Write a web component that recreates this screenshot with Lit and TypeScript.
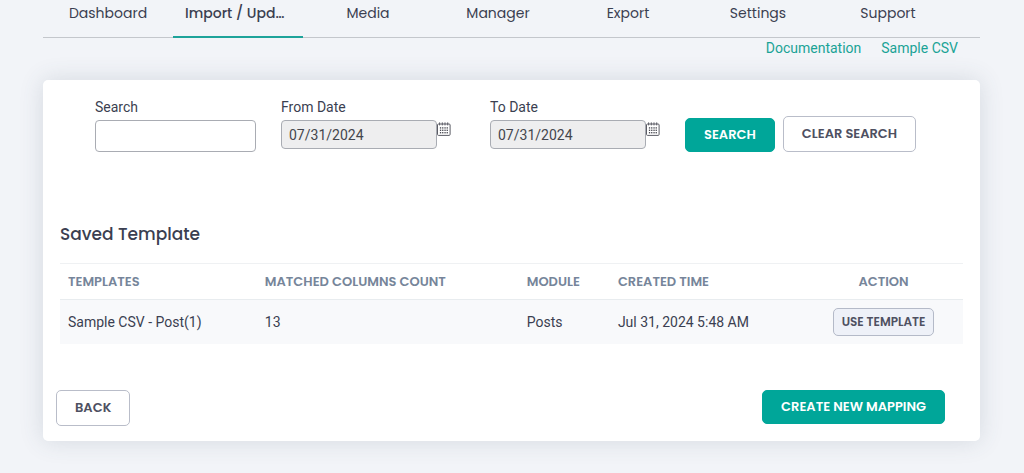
import { LitElement, html, css, svg } from "lit";
import { customElement, state } from "lit/decorators.js";
import { classMap } from "lit/directives/class-map.js";

interface Template {
  name: string;
  count: number;
  module: string;
  created: string;
}

const TABS = ["Dashboard", "Import / Update", "Media", "Manager", "Export", "Settings", "Support"];

const TEMPLATES: Template[] = [
  { name: "Sample CSV - Post(1)", count: 13, module: "Posts", created: "Jul 31, 2024 5:48 AM" },
];

@customElement("calendar-icon")
class CalendarIcon extends LitElement {
  static styles = css`
    :host {
      display: block;
      width: 14px;
      height: 14px;
    }
    svg {
      display: block;
    }
  `;

  render() {
    const dots = [5.2, 7.6, 10].flatMap((y) =>
      [2.9, 5.1, 7.4, 9.6].map((x) => svg`<rect x=${x} y=${y} width="1.3" height="1.4" />`)
    );
    return html`
      <svg width="14" height="14" viewBox="0 0 14 14" fill="#4c4d55" aria-hidden="true">
        <rect x="0.5" y="2" width="12.6" height="11.4" rx="1" fill="#fff" stroke="#5c5d66" />
        <path d="M2.6 0.4v3M5.3 0.4v3M8 0.4v3M10.7 0.4v3" stroke="#5c5d66" stroke-width="1" />
        ${dots}
      </svg>
    `;
  }
}

@customElement("app-root")
class AppRoot extends LitElement {
  @state() private active = 1;

  static styles = css`
    :host {
      display: block;
      box-sizing: border-box;
      min-height: 100vh;
      padding: 0 44px 32px 43px;
      background: #f2f4f8;
      color: #3b3f51;
      font: 14px/20px Roboto, sans-serif;
    }
    *,
    *::before {
      box-sizing: border-box;
    }
    a {
      text-decoration: none;
      color: inherit;
    }
    .tabs,
    h1,
    th,
    button {
      font-family: Poppins, Inter, sans-serif;
    }
    .tabs {
      display: flex;
      height: 38px;
      border-bottom: 1px solid #c4c7cc;
    }
    .tab {
      flex: 0 1 130px;
      height: 38px;
      padding: 3px 12px 0;
      border-bottom: 2px solid transparent;
      text-align: center;
      overflow: hidden;
      white-space: nowrap;
      text-overflow: ellipsis;
    }
    .tab.active {
      border-color: #1ea39a;
      font-weight: 500;
    }
    .links {
      display: flex;
      justify-content: flex-end;
      gap: 20px;
      padding: 0 22px 22px 0;
      color: #1aa396;
    }
    .card {
      border-radius: 5px;
      background: #fff;
      box-shadow: 0 0 24px rgba(60, 80, 100, 0.16);
      padding: 17px 17px 15px;
    }
    .filters {
      display: grid;
      grid-template-columns: 161fr 170fr 184fr 231px;
      column-gap: 25px;
      align-items: start;
      padding: 0 47px 0 35px;
    }
    .to {
      padding-left: 14px;
    }
    label {
      display: block;
      margin-bottom: 3px;
    }
    input {
      display: block;
      width: 100%;
      min-width: 0;
      height: 32px;
      padding: 0 7px;
      border: 1px solid #a9acb3;
      border-radius: 4px;
      background: #fff;
      color: #44464d;
      font: inherit;
    }
    .date {
      display: flex;
    }
    .date input {
      flex: 1;
      height: 29px;
      background: #eeeeef;
    }
    .pick {
      display: block;
      align-self: start;
      margin-top: 2px;
      padding: 0;
      border: 0;
      background: none;
    }
    .actions {
      display: flex;
      align-items: flex-end;
      gap: 8px;
      padding-top: 19px;
    }
    .btn {
      height: 36px;
      padding: 0 18px;
      border: 1px solid #b9bdc9;
      border-radius: 5px;
      background: #fff;
      color: #4e5061;
      font-size: 13px;
      font-weight: 600;
      line-height: 20px;
      white-space: nowrap;
    }
    .btn.primary {
      height: 34px;
      border-color: #00a699;
      background: #00a699;
      color: #fff;
    }
    h1 {
      margin: 70px 0 17px;
      font-size: 17px;
      line-height: 24px;
      font-weight: 500;
    }
    table {
      width: 100%;
      table-layout: fixed;
      border-collapse: collapse;
    }
    th,
    td {
      padding: 0 8px;
      text-align: left;
      font-weight: 400;
      white-space: nowrap;
    }
    th {
      height: 36px;
      border-top: 1px solid #eff1f3;
      border-bottom: 1px solid #e8ecef;
      color: #76859a;
      font-size: 13px;
      font-weight: 600;
    }
    td {
      height: 44px;
      background: #f8f9fb;
    }
    .name {
      width: 21.8%;
    }
    .count {
      width: 29%;
    }
    .module {
      width: 10.1%;
    }
    .created {
      width: 21.5%;
    }
    .action {
      text-align: center;
    }
    .btn.small {
      height: 28px;
      padding: 0 8px;
      background: #eef1f8;
      border-color: #b4bac8;
      font-size: 12px;
    }
    .footer {
      display: flex;
      justify-content: space-between;
      align-items: flex-start;
      padding-right: 18px;
      margin: 46px 0 0 -4px;
    }
  `;

  private dateField(id: string, label: string, extra = "") {
    return html`
      <div class=${extra}>
        <label for=${id}>${label}</label>
        <div class="date">
          <input id=${id} type="text" readonly value="07/31/2024" />
          <button class="pick" type="button" aria-label="Choose date"><calendar-icon></calendar-icon></button>
        </div>
      </div>
    `;
  }

  render() {
    return html`
      <nav class="tabs">
        ${TABS.map(
          (tab, i) => html`<a
            href="#"
            class=${classMap({ tab: true, active: i === this.active })}
            @click=${(e: Event) => {
              e.preventDefault();
              this.active = i;
            }}
            >${tab}</a
          >`
        )}
      </nav>
      <div class="links">
        <a href="#">Documentation</a>
        <a href="#">Sample CSV</a>
      </div>
      <main class="card">
        <form class="filters" @submit=${(e: Event) => e.preventDefault()}>
          <div>
            <label for="search">Search</label>
            <input id="search" type="text" />
          </div>
          ${this.dateField("from", "From Date")} ${this.dateField("to", "To Date", "to")}
          <div class="actions">
            <button class="btn primary" type="submit">SEARCH</button>
            <button class="btn" type="reset">CLEAR SEARCH</button>
          </div>
        </form>
        <h1>Saved Template</h1>
        <table>
          <thead>
            <tr>
              <th class="name">TEMPLATES</th>
              <th class="count">MATCHED COLUMNS COUNT</th>
              <th class="module">MODULE</th>
              <th class="created">CREATED TIME</th>
              <th class="action">ACTION</th>
            </tr>
          </thead>
          <tbody>
            ${TEMPLATES.map(
              (t) => html`<tr>
                <td>${t.name}</td>
                <td>${t.count}</td>
                <td>${t.module}</td>
                <td>${t.created}</td>
                <td class="action"><button class="btn small" type="button">USE TEMPLATE</button></td>
              </tr>`
            )}
          </tbody>
        </table>
        <div class="footer">
          <button class="btn" type="button">BACK</button>
          <button class="btn primary" type="button">CREATE NEW MAPPING</button>
        </div>
      </main>
    `;
  }
}
